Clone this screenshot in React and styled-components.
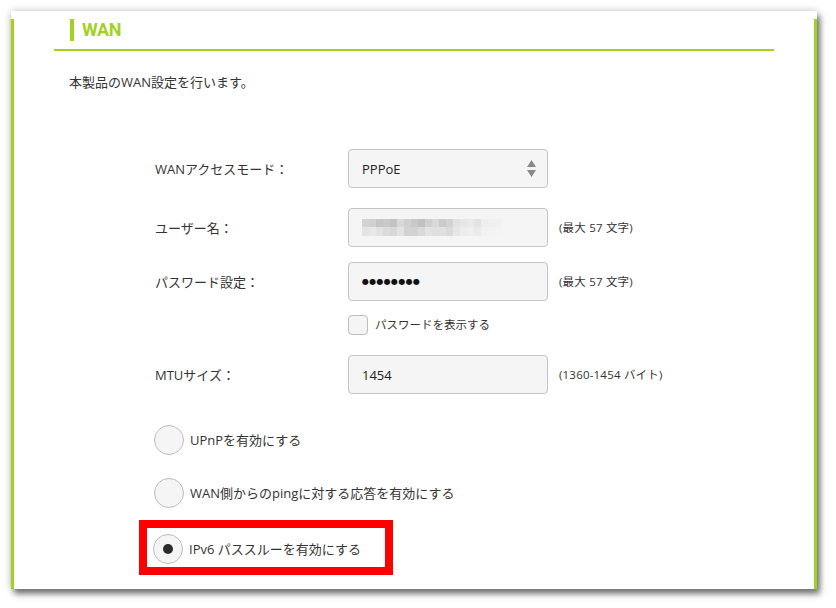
import styled, { createGlobalStyle } from "styled-components";

const GREEN = "#a2d21e";

const Global = createGlobalStyle`
  body {
    margin: 0;
    background: #ffffff;
    font-family: "Open Sans", "Noto Sans CJK JP", sans-serif;
    color: #333333;
  }
`;

const Page = styled.div`
  padding: 11px 0 0 11px;
  height: 608px;
  box-sizing: border-box;
  overflow: hidden;
`;

const Panel = styled.div`
  width: 806px;
  height: 578px;
  box-sizing: border-box;
  padding-top: 8px;
  background: #ffffff;
  box-shadow: 0 0 8px rgba(0, 0, 0, 0.22), 3px 5px 6px rgba(0, 0, 0, 0.5);
`;

const Inner = styled.div`
  height: 100%;
  box-sizing: border-box;
  border-left: 3px solid ${GREEN};
  border-right: 3px solid ${GREEN};
  padding: 0 40px;
`;

const Header = styled.div`
  height: 32px;
  box-sizing: border-box;
  padding-left: 16px;
  border-bottom: 2px solid ${GREEN};
`;

const Title = styled.h2`
  margin: 0;
  height: 22px;
  border-left: 4px solid ${GREEN};
  padding-left: 8px;
  font-family: Roboto, "Liberation Sans", sans-serif;
  font-weight: 700;
  font-size: 18px;
  line-height: 22px;
  letter-spacing: -0.3px;
  color: ${GREEN};
`;

const Intro = styled.p`
  margin: 21px 0 0;
  padding-left: 15px;
  font-size: 13px;
  line-height: 20px;
`;

const Form = styled.div`
  margin-top: 57px;
  padding-left: 101px;
  display: flex;
  flex-direction: column;
`;

const Row = styled.div`
  display: flex;
  align-items: center;
  height: ${(p) => p.h || 39}px;
  margin-top: ${(p) => p.gap || 0}px;
`;

const Label = styled.div`
  width: 193px;
  font-size: 13px;
  line-height: 18px;
`;

const Field = styled.div`
  position: relative;
  width: 200px;
  height: 39px;
  box-sizing: border-box;
  border: 1px solid #c4c4c4;
  border-radius: 4px;
  background: #f5f5f5;
  display: flex;
  align-items: center;
  padding-left: 13px;
  font-size: 13px;
  color: #222;
`;

const Arrows = styled.div`
  position: absolute;
  right: 11px;
  top: 10px;
  display: flex;
  flex-direction: column;
  gap: 3px;
`;

const Dots = styled.span`
  font-family: "DejaVu Sans", sans-serif;
  font-size: 8px;
  letter-spacing: 0.3px;
  color: #111;
`;

const Mosaic = styled.div`
  display: grid;
  grid-template-columns: repeat(20, 7px);
  grid-template-rows: 8px 9px;
`;

const Note = styled.div`
  margin-left: 11px;
  font-size: 11.5px;
  line-height: 16px;
  letter-spacing: 0.2px;
`;

const Spacer = styled.div`
  width: 193px;
`;

const Check = styled.span`
  width: 20px;
  height: 20px;
  box-sizing: border-box;
  border: 1px solid #bdbdbd;
  border-radius: 4px;
  background: #f5f5f5;
`;

const CheckText = styled.span`
  margin-left: 7px;
  font-size: 11.5px;
  line-height: 16px;
`;

const RadioRow = styled.div`
  display: flex;
  align-items: center;
  margin-top: ${(p) => p.gap || 0}px;
  margin-left: -1px;
`;

const Radio = styled.span`
  width: 30px;
  height: 30px;
  box-sizing: border-box;
  border: 1px solid #bdbdbd;
  border-radius: 50%;
  background: #f5f5f5;
  display: flex;
  align-items: center;
  justify-content: center;

  &::after {
    content: "";
    display: ${(p) => (p.checked ? "block" : "none")};
    width: 10px;
    height: 10px;
    border-radius: 50%;
    background: #2b2b2b;
  }
`;

const RadioText = styled.span`
  margin-left: 6px;
  font-size: 13px;
  line-height: 18px;
`;

const Highlight = styled.div`
  width: 254px;
  height: 55px;
  box-sizing: border-box;
  margin: 12px 0 0 -16px;
  border: 8px solid #ff0000;
  padding: 6px 0 0 7px;
`;

const mosaicColors = [
  "#d6d2d0", "#cfd1d4", "#c8c4c3", "#c9c9cc", "#c4c2c5", "#d8d8d8", "#cdd1d4",
  "#c6c8ca", "#bfc1c2", "#d0d0d0", "#d9d9d9", "#cbcbcd", "#d5d3cf", "#e0e2e4",
  "#e6e6e6", "#e9e9e9", "#e3e3e3", "#eeeeee", "#f0f0f0", "#f1f1f1",
  "#e4e4e4", "#e8e8e8", "#e2e2e2", "#dcdcdc", "#d8d8da", "#e3e3e3", "#d3d3d3",
  "#d1d2d3", "#d9d9d9", "#e2e2e2", "#dfdfdf", "#e1e1e1", "#dadada", "#e6e6e6",
  "#ececec", "#eeeeee", "#ebebeb", "#f2f2f2", "#f3f3f3", "#f4f4f4",
];

function SelectArrows() {
  return (
    <Arrows>
      <svg width="9" height="7" viewBox="0 0 9 7">
        <path d="M4.5 0 L9 7 L0 7 Z" fill="#8a8a8a" />
      </svg>
      <svg width="9" height="7" viewBox="0 0 9 7">
        <path d="M0 0 L9 0 L4.5 7 Z" fill="#8a8a8a" />
      </svg>
    </Arrows>
  );
}

export default function App() {
  return (
    <>
      <Global />
      <Page>
        <Panel>
          <Inner>
            <Header>
              <Title>WAN</Title>
            </Header>
            <Intro>本製品のWAN設定を行います。</Intro>

            <Form>
              <Row>
                <Label>WANアクセスモード：</Label>
                <Field>
                  PPPoE
                  <SelectArrows />
                </Field>
              </Row>

              <Row gap={20}>
                <Label>ユーザー名：</Label>
                <Field>
                  <Mosaic>
                    {mosaicColors.map((c, i) => (
                      <span key={i} style={{ background: c }} />
                    ))}
                  </Mosaic>
                </Field>
                <Note>(最大 57 文字)</Note>
              </Row>

              <Row gap={15}>
                <Label>パスワード設定：</Label>
                <Field>
                  <Dots>●●●●●●●●</Dots>
                </Field>
                <Note>(最大 57 文字)</Note>
              </Row>

              <Row gap={14} h={20}>
                <Spacer />
                <Check />
                <CheckText>パスワードを表示する</CheckText>
              </Row>

              <Row gap={20}>
                <Label>MTUサイズ：</Label>
                <Field>1454</Field>
                <Note>(1360-1454 バイト)</Note>
              </Row>

              <RadioRow gap={31}>
                <Radio />
                <RadioText>UPnPを有効にする</RadioText>
              </RadioRow>

              <RadioRow gap={23}>
                <Radio />
                <RadioText>WAN側からのpingに対する応答を有効にする</RadioText>
              </RadioRow>

              <Highlight>
                <RadioRow>
                  <Radio checked />
                  <RadioText>IPv6 パススルーを有効にする</RadioText>
                </RadioRow>
              </Highlight>
            </Form>
          </Inner>
        </Panel>
      </Page>
    </>
  );
}
